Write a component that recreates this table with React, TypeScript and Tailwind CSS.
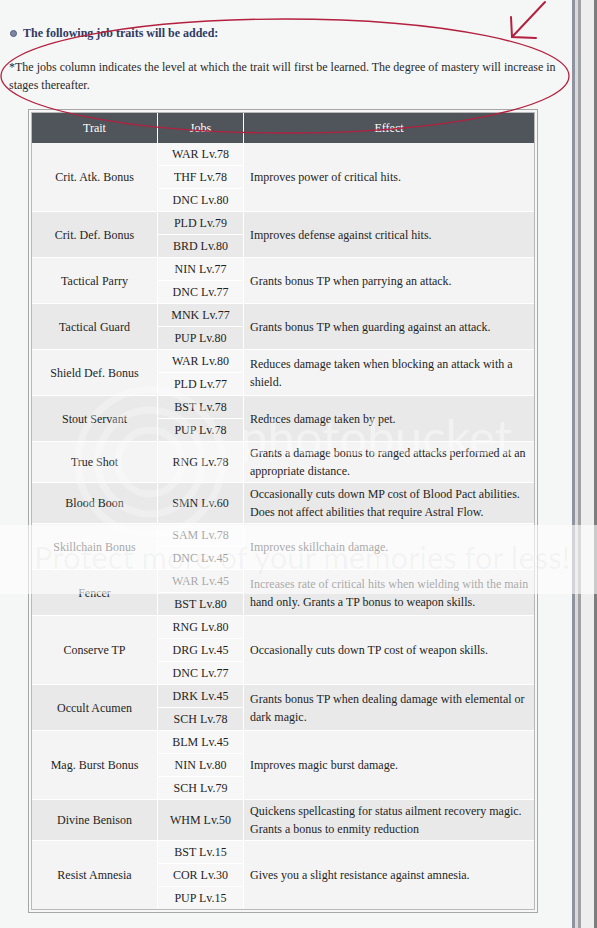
import React from 'react';

type Trait = { trait: string; jobs: string[]; effect: string };

const traits: Trait[] = [
  { trait: 'Crit. Atk. Bonus', jobs: ['WAR Lv.78', 'THF Lv.78', 'DNC Lv.80'], effect: 'Improves power of critical hits.' },
  { trait: 'Crit. Def. Bonus', jobs: ['PLD Lv.79', 'BRD Lv.80'], effect: 'Improves defense against critical hits.' },
  { trait: 'Tactical Parry', jobs: ['NIN Lv.77', 'DNC Lv.77'], effect: 'Grants bonus TP when parrying an attack.' },
  { trait: 'Tactical Guard', jobs: ['MNK Lv.77', 'PUP Lv.80'], effect: 'Grants bonus TP when guarding against an attack.' },
  { trait: 'Shield Def. Bonus', jobs: ['WAR Lv.80', 'PLD Lv.77'], effect: 'Reduces damage taken when blocking an attack with a shield.' },
  { trait: 'Stout Servant', jobs: ['BST Lv.78', 'PUP Lv.78'], effect: 'Reduces damage taken by pet.' },
  { trait: 'True Shot', jobs: ['RNG Lv.78'], effect: 'Grants a damage bonus to ranged attacks performed at an appropriate distance.' },
  { trait: 'Blood Boon', jobs: ['SMN Lv.60'], effect: 'Occasionally cuts down MP cost of Blood Pact abilities. Does not affect abilities that require Astral Flow.' },
  { trait: 'Skillchain Bonus', jobs: ['SAM Lv.78', 'DNC Lv.45'], effect: 'Improves skillchain damage.' },
  { trait: 'Fencer', jobs: ['WAR Lv.45', 'BST Lv.80'], effect: 'Increases rate of critical hits when wielding with the main hand only. Grants a TP bonus to weapon skills.' },
  { trait: 'Conserve TP', jobs: ['RNG Lv.80', 'DRG Lv.45', 'DNC Lv.77'], effect: 'Occasionally cuts down TP cost of weapon skills.' },
  { trait: 'Occult Acumen', jobs: ['DRK Lv.45', 'SCH Lv.78'], effect: 'Grants bonus TP when dealing damage with elemental or dark magic.' },
  { trait: 'Mag. Burst Bonus', jobs: ['BLM Lv.45', 'NIN Lv.80', 'SCH Lv.79'], effect: 'Improves magic burst damage.' },
  { trait: 'Divine Benison', jobs: ['WHM Lv.50'], effect: 'Quickens spellcasting for status ailment recovery magic. Grants a bonus to enmity reduction' },
  { trait: 'Resist Amnesia', jobs: ['BST Lv.15', 'COR Lv.30', 'PUP Lv.15'], effect: 'Gives you a slight resistance against amnesia.' },
];

function TraitTable() {
  return (
    <div className="ml-[19px] mt-[15px] w-[510px] border border-[#a7a7a7] bg-[#f7f7f7] p-[2px]">
      <div className="border border-[#b9b9b9]">
        <table className="w-[502px] table-fixed border-separate border-spacing-0 text-[12px] leading-[18px] text-[#1f1f1f]">
          <colgroup>
            <col className="w-[126px]" />
            <col className="w-[86px]" />
            <col className="w-[290px]" />
          </colgroup>
          <thead>
            <tr className="bg-[#50545b] text-white">
              <th className="h-[30px] border-r border-white p-0 font-normal">Trait</th>
              <th className="h-[30px] border-r border-white p-0 font-normal">Jobs</th>
              <th className="h-[30px] p-0 font-normal">Effect</th>
            </tr>
          </thead>
          <tbody>
            {traits.map((t, i) => {
              const odd = i % 2 === 1;
              const last = i === traits.length - 1;
              return t.jobs.map((job, j) => (
                <tr key={t.trait + job} className={odd ? 'bg-[#e9e9e9]' : 'bg-[#f4f4f4]'}>
                  {j === 0 && (
                    <td
                      rowSpan={t.jobs.length}
                      className={`border-r border-white px-1 text-center ${last ? '' : 'border-b'}`}
                    >
                      {t.trait}
                    </td>
                  )}
                  <td
                    className={`border-r border-white px-1 py-[2px] text-center ${odd ? '' : 'bg-[#f7f7f7]'} ${
                      last && j === t.jobs.length - 1 ? '' : 'border-b'
                    }`}
                  >
                    {job}
                  </td>
                  {j === 0 && (
                    <td
                      rowSpan={t.jobs.length}
                      className={`border-white py-[2px] pl-[6px] pr-[4px] text-left ${last ? '' : 'border-b'}`}
                    >
                      {t.effect}
                    </td>
                  )}
                </tr>
              ));
            })}
          </tbody>
        </table>
      </div>
    </div>
  );
}

export default function App() {
  return (
    <div className="relative flex h-[928px] w-[597px] overflow-hidden bg-[#f5f6f6] [font-family:'Liberation_Serif','Times_New_Roman',serif]">
      <div className="w-[572px] shrink-0 pl-[9px] pt-[24px]">
        <div className="flex items-center gap-[6px] pl-px text-[12px] leading-[18px]">
          <span className="h-[7px] w-[7px] rounded-full border border-[#505a78] bg-[#7f88a2]" />
          <span className="font-bold text-[#2f3a62]">The following job traits will be added:</span>
        </div>
        <p className="mt-[16px] w-[558px] text-[12px] leading-[18px] text-[#2a2a2a]">
          *The jobs column indicates the level at which the trait will first be learned. The degree of mastery will
          increase in stages thereafter.
        </p>
        <TraitTable />
      </div>

      {/* right frame / scrollbar edge */}
      <div className="flex h-full grow">
        <div className="w-[3px] bg-[#8e939f]" />
        <div className="w-[3px] bg-[#d9dadc]" />
        <div className="w-[3px] bg-[#a2a2a2]" />
        <div className="w-[13px] bg-[#eeeeee]" />
        <div className="w-[3px] bg-[#7d7d7d]" />
      </div>

      {/* image host watermark */}
      <div className="pointer-events-none absolute inset-0">
        <svg className="absolute left-0 top-0" width="597" height="928">
          <g fill="none" stroke="#ffffff" strokeOpacity="0.3" strokeWidth="7">
            <circle cx="150" cy="462" r="72" />
            <circle cx="150" cy="462" r="52" />
            <circle cx="150" cy="462" r="32" />
          </g>
        </svg>
        <div className="absolute left-[240px] top-[412px] [font-family:Lato,sans-serif] text-[49px] leading-none text-white/40">
          photobucket
        </div>
        <div className="absolute left-0 right-0 top-[525px] h-[69px] bg-white/60">
          <div className="whitespace-nowrap pl-[34px] pt-[17px] [font-family:Lato,sans-serif] text-[31px] leading-none text-black/[0.045]">
            Protect more of your memories for less!
          </div>
        </div>
      </div>

      {/* red hand-drawn annotation */}
      <svg className="pointer-events-none absolute left-0 top-0" width="597" height="160">
        <g fill="none" stroke="#b3213f" strokeLinecap="round">
          <ellipse cx="285" cy="76" rx="284" ry="57" strokeWidth="1.3" />
          <path d="M545 2 L512 37 M511 17 L512 37 L536 38" strokeWidth="2" />
        </g>
      </svg>
    </div>
  );
}
